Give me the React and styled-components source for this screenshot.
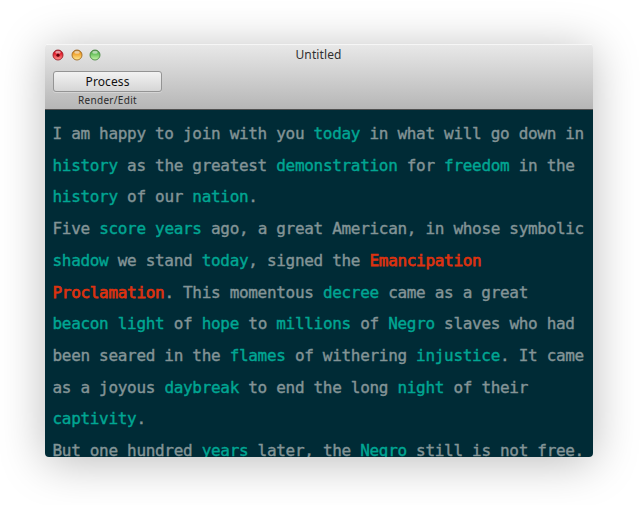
import React from "react";
import styled, { createGlobalStyle } from "styled-components";

const GlobalStyle = createGlobalStyle`
  html, body { margin: 0; background: #fff; overflow: hidden; }
`;

const Desktop = styled.main`
  box-sizing: border-box;
  width: 640px;
  height: 505px;
  padding: 44px 47px 48px 45px;
  background: #fff;
  overflow: hidden;
`;

const Window = styled.section`
  display: flex;
  flex-direction: column;
  width: 548px;
  height: 413px;
  border-radius: 4px;
  overflow: hidden;
  box-shadow: 0 5px 46px rgba(0, 0, 0, 0.27);
`;

const Chrome = styled.header`
  box-sizing: border-box;
  flex: none;
  height: 66px;
  background: linear-gradient(#e8e8e8, #b6b6b6);
  border-top: 1px solid #f6f6f6;
  border-bottom: 1px solid #515151;
`;

const TitleBar = styled.div`
  display: grid;
  grid-template-columns: 1fr auto 1fr;
  align-items: center;
  height: 20px;
  padding: 0 8px 0 7px;
`;

const Lights = styled.div`
  display: flex;
  gap: 6.7px;
`;

const LightSvg = styled.svg`
  display: block;
  width: 12px;
  height: 12px;
`;

const Title = styled.h1`
  margin: 0;
  font: 400 12px/18px "Noto Sans", sans-serif;
  letter-spacing: 0.1px;
  color: #303030;
`;

const ToolItem = styled.div`
  width: 109px;
  margin: 6px 0 0 8px;
  text-align: center;
`;

const ProcessButton = styled.button`
  display: block;
  box-sizing: border-box;
  width: 109px;
  height: 21px;
  padding: 0;
  border: 1px solid #949494;
  border-radius: 3px;
  background: linear-gradient(#f2f2f2, #d6d6d6);
  box-shadow: 0 1px 0 rgba(255, 255, 255, 0.3);
  font: 400 12px/18px "Noto Sans", sans-serif;
  letter-spacing: 0.1px;
  color: #111;
`;

const ToolLabel = styled.div`
  margin-top: 1px;
  font: 400 10px/14px "Noto Sans", sans-serif;
  letter-spacing: 0.32px;
  color: #2b2b2b;
`;

const Editor = styled.article`
  flex: 1;
  min-height: 0;
  padding: 8px 0 0 7.5px;
  overflow: hidden;
  background: #002b36;
  font-family: "DejaVu Sans Mono", monospace;
  font-size: 16px;
  letter-spacing: -0.31px;
  line-height: 31.7px;
  color: #839496;
  -webkit-text-stroke: 0.4px currentColor;
`;

const Line = styled.div`
  white-space: pre;
`;

const Keyword = styled.span`
  color: #00a693;
`;

const Name = styled.span`
  color: #dc3210;
  -webkit-text-stroke: 0.75px currentColor;
`;

const LIGHTS = [
  { id: "close", edge: "#9c1c26", core: "#e51b2a", glow: "#ff9a92", dot: true },
  { id: "minimize", edge: "#a06a24", core: "#f0a12c", glow: "#ffeb94" },
  { id: "zoom", edge: "#4a8842", core: "#62bd56", glow: "#c9f8ac" },
];

function Light({ id, edge, core, glow, dot }) {
  return (
    <LightSvg viewBox="0 0 12 12" aria-label={id}>
      <defs>
        <linearGradient id={id} x1="0" y1="0" x2="0" y2="1">
          <stop offset="0" stopColor={edge} />
          <stop offset="0.35" stopColor={core} />
          <stop offset="1" stopColor={glow} />
        </linearGradient>
      </defs>
      <circle cx="6" cy="6" r="5" fill={`url(#${id})`} stroke={edge} strokeWidth="0.9" />
      <ellipse cx="6" cy="3.2" rx="2.8" ry="1.5" fill="#fff" opacity="0.55" />
      {dot && <circle cx="6" cy="6.2" r="1.6" fill="#610009" />}
    </LightSvg>
  );
}

// Inside a line, [word] marks a keyword and {word} marks a proper name.
const LINES = [
  "I am happy to join with you [today] in what will go down in",
  "[history] as the greatest [demonstration] for [freedom] in the",
  "[history] of our [nation].",
  "Five [score] [years] ago, a great American, in whose symbolic",
  "[shadow] we stand [today], signed the {Emancipation}",
  "{Proclamation}. This momentous [decree] came as a great",
  "[beacon] [light] of [hope] to [millions] of [Negro] slaves who had",
  "been seared in the [flames] of withering [injustice]. It came",
  "as a joyous [daybreak] to end the long [night] of their",
  "[captivity].",
  "But one hundred [years] later, the [Negro] still is not free.",
];

function renderToken(token, index) {
  if (token.startsWith("[")) return <Keyword key={index}>{token.slice(1, -1)}</Keyword>;
  if (token.startsWith("{")) return <Name key={index}>{token.slice(1, -1)}</Name>;
  return token;
}

export default function App() {
  return (
    <>
      <GlobalStyle />
      <Desktop>
        <Window>
          <Chrome>
            <TitleBar>
              <Lights>
                {LIGHTS.map((light) => (
                  <Light key={light.id} {...light} />
                ))}
              </Lights>
              <Title>Untitled</Title>
            </TitleBar>
            <ToolItem>
              <ProcessButton>Process</ProcessButton>
              <ToolLabel>Render/Edit</ToolLabel>
            </ToolItem>
          </Chrome>
          <Editor>
            {LINES.map((line) => (
              <Line key={line}>{line.split(/(\[.*?\]|\{.*?\})/).map(renderToken)}</Line>
            ))}
          </Editor>
        </Window>
      </Desktop>
    </>
  );
}
